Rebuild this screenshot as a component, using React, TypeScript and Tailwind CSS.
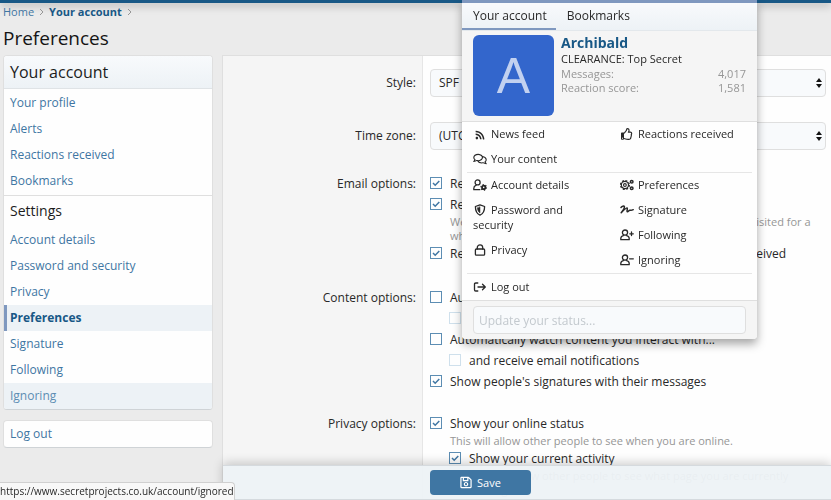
import type { ReactNode } from "react";
import { FaRegComments, FaRegSave, FaRegThumbsUp, FaRss } from "react-icons/fa";

type IconProps = { children: ReactNode };

const LineIcon: React.FC<IconProps> = ({ children }) => (
  <svg
    viewBox="0 0 14 12"
    className="h-3 w-[14px]"
    fill="none"
    stroke="currentColor"
    strokeWidth="1.3"
    strokeLinecap="round"
    strokeLinejoin="round"
    aria-hidden="true"
  >
    {children}
  </svg>
);

const person = (
  <>
    <circle cx="5" cy="3.6" r="2.6" />
    <path d="M3.4 6.7C1.8 7 .8 8 .8 9.6v1.1h8.4V9.6C9.2 8 8.2 7 6.6 6.7" />
  </>
);

const icons = {
  feed: (
    <FaRss className="h-[10px] w-[14px]" />
  ),
  like: <FaRegThumbsUp className="h-3 w-[14px]" />,
  content: <FaRegComments className="h-3 w-[14px]" />,
  account: (
    <LineIcon>
      <circle cx="4.6" cy="3.4" r="2.5" />
      <path d="M3 6.4C1.6 6.8.8 7.8.8 9.4v1.3h6" />
      <circle cx="10.7" cy="8.4" r="1.7" strokeWidth="1.8" />
      <circle cx="10.7" cy="8.4" r="2.8" strokeWidth="1.2" strokeDasharray="1.2 1.73" strokeLinecap="butt" />
    </LineIcon>
  ),
  preferences: (
    <LineIcon>
      <circle cx="4.9" cy="6" r="3.6" strokeWidth="1.2" />
      <circle cx="4.9" cy="6" r="4.5" strokeWidth="1.1" strokeDasharray="2 1.53" strokeLinecap="butt" />
      <circle cx="4.9" cy="6" r="1.4" strokeWidth="1.1" />
      <circle cx="11.7" cy="2.7" r="1.3" strokeWidth="1.5" />
      <circle cx="11.7" cy="9.3" r="1.3" strokeWidth="1.5" />
    </LineIcon>
  ),
  password: (
    <LineIcon>
      <path d="M7 .8 11.6 2.5C11.6 7 10.2 9.8 7 11.2 3.8 9.8 2.4 7 2.4 2.5Z" />
      <path d="M7 3v6C5.2 7.8 4.5 6.1 4.4 4Z" fill="currentColor" strokeWidth=".5" />
    </LineIcon>
  ),
  signature: (
    <LineIcon>
      <path
        strokeWidth="1.5"
        d="M1 3.4C2 2.2 4 1.5 4.4 2.7c.4 1.7-1.9 4.4-3.2 6C3.5 6.4 6.2 3.6 7.1 3.9c.9.3-.8 3.6.2 3.9 1 .3 1.5-1.6 2.5-1.6.8 0 1.3.7 3.4-.5"
      />
    </LineIcon>
  ),
  privacy: (
    <LineIcon>
      <rect x="2.4" y="5" width="9.2" height="6.2" rx="1" />
      <path d="M4.3 5V3.5a2.7 2.7 0 0 1 5.4 0V5" />
    </LineIcon>
  ),
  following: (
    <LineIcon>
      {person}
      <path d="M9.8 4.8h3.5M11.5 3v3.6" />
    </LineIcon>
  ),
  ignoring: (
    <LineIcon>
      {person}
      <path d="M9.6 4.8h3.7" />
    </LineIcon>
  ),
  logout: (
    <LineIcon>
      <path d="M4.8 2H2.7C1.9 2 1.5 2.4 1.5 3.2v5.6c0 .8.4 1.2 1.2 1.2h2.1M5 6h7M9.5 3.3 12.3 6 9.5 8.7" />
    </LineIcon>
  ),
};

const accountLinks = ["Your profile", "Alerts", "Reactions received", "Bookmarks"];
const settingsLinks = [
  "Account details",
  "Password and security",
  "Privacy",
  "Preferences",
  "Signature",
  "Following",
  "Ignoring",
];

const SideLink: React.FC<{ label: string }> = ({ label }) => {
  let look = "pl-[6px]";
  if (label === "Preferences") {
    look = "border-l-[3px] border-[#7f98bf] bg-[#edf2f6] pl-[3px] font-bold text-[#185886]";
  }
  if (label === "Ignoring") look = "bg-[#edf2f6] pl-[6px] text-[#5c8db3]";
  return (
    <li>
      <a href="#" className={`block leading-[26px] ${look}`}>
        {label}
      </a>
    </li>
  );
};

const Sidebar: React.FC = () => (
  <nav className="w-[210px] shrink-0 text-xs text-[#3f76a3]">
    <div className="overflow-hidden rounded-sm border border-[#dfdfdf] border-b-[#cfd3d6] bg-[#fefefe]">
      <h2 className="border-b border-[#dfe3e6] bg-linear-to-b from-[#f8fafc] to-[#edf2f6] pl-[6px] text-base leading-8 text-[#1c1c1c]">
        Your account
      </h2>
      <ul className="pt-px pb-px">
        {accountLinks.map((label) => (
          <SideLink key={label} label={label} />
        ))}
      </ul>
      <h3 className="border-t border-[#dfdfdf] pt-px pl-[6px] text-sm leading-7 text-[#1c1c1c]">Settings</h3>
      <ul className="pt-[2px]">
        {settingsLinks.map((label) => (
          <SideLink key={label} label={label} />
        ))}
      </ul>
    </div>
    <a
      href="#"
      className="mt-[10px] block rounded-sm border border-[#dfdfdf] border-b-[#cfd3d6] bg-[#fefefe] pl-[6px] leading-[26px]"
    >
      Log out
    </a>
  </nav>
);

type CheckProps = {
  label: string;
  checked?: boolean;
  disabled?: boolean;
  hint?: string;
};

const Check: React.FC<CheckProps> = ({ label, checked, disabled, hint }) => (
  <div>
    <label className="flex gap-2">
      <span className="relative mt-[3px] h-3 w-3 shrink-0">
        <input
          type="checkbox"
          defaultChecked={checked}
          disabled={disabled}
          className="peer block h-3 w-3 appearance-none border border-[#5c8db3] bg-[#fefefe] disabled:border-[#cfe0ec]"
        />
        <svg viewBox="0 0 12 12" className="pointer-events-none absolute inset-0 hidden peer-checked:block">
          <path d="m3 6 2.2 2.2L9.3 4" fill="none" strokeWidth="1.5" className="stroke-[#3f76a3]" />
        </svg>
      </span>
      <span>{label}</span>
    </label>
    {hint && <p className="pl-5 text-[11px] leading-[14px] text-[#969696]">{hint}</p>}
  </div>
);

const Row: React.FC<{ label: string; id?: string; pad: string; children: ReactNode }> = ({
  label,
  id,
  pad,
  children,
}) => (
  <div className="flex">
    <div className={`w-[200px] shrink-0 border-r border-[#e6e6e6] bg-[#f5f5f5] pr-[6px] text-right ${pad}`}>
      <label htmlFor={id}>{label}</label>
    </div>
    <div className={`min-w-0 flex-1 pr-[5px] pl-[7px] ${pad}`}>{children}</div>
  </div>
);

const Select: React.FC<{ id: string; value: string }> = ({ id, value }) => (
  <div className="relative">
    <select
      id={id}
      className="block h-7 w-full appearance-none rounded-sm border border-[#dfdfdf] bg-[#f8fafc] px-2 text-xs"
    >
      <option>{value}</option>
    </select>
    <svg viewBox="0 0 6 10" className="pointer-events-none absolute top-[9px] right-1 h-[10px] w-[6px]">
      <path d="M3 0 6 4H0ZM3 10 0 6h6Z" fill="#141414" />
    </svg>
  </div>
);

const PreferencesForm: React.FC = () => (
  <form className="min-w-0 flex-1 border-t border-l border-[#dfdfdf] bg-[#fefefe] text-xs leading-5">
    <Row label="Style:" id="style" pad="pt-[13px] pb-3 leading-7">
      <Select id="style" value="SPF" />
    </Row>
    <Row label="Time zone:" id="zone" pad="pt-[13px] pb-3 leading-7">
      <Select id="zone" value="(UTC+00:00) Western Europe Time, London, Lisbon" />
    </Row>
    <Row label="Email options:" pad="pt-3 pb-3">
      <div className="flex flex-col gap-px">
        <Check label="Receive news and update emails" checked />
        <Check
          label="Receive activity summary email"
          checked
          hint="We will send you an email with top content if you have not visited for a while."
        />
        <Check label="Receive email when a new conversation message is received" checked />
      </div>
    </Row>
    <Row label="Content options:" pad="pt-3 pb-[11px]">
      <div className="flex flex-col gap-px">
        <Check label="Automatically watch content you create..." />
        <div className="pl-[19px]">
          <Check label="and receive email notifications" disabled />
        </div>
        <Check label="Automatically watch content you interact with..." />
        <div className="pl-[19px]">
          <Check label="and receive email notifications" disabled />
        </div>
        <Check label="Show people's signatures with their messages" checked />
      </div>
    </Row>
    <Row label="Privacy options:" pad="pt-[11px] pb-4">
      <div className="flex flex-col gap-px">
        <Check
          label="Show your online status"
          checked
          hint="This will allow other people to see when you are online."
        />
        <div className="pl-[19px]">
          <Check
            label="Show your current activity"
            checked
            hint="This will allow other people to see what page you are currently viewing."
          />
        </div>
      </div>
    </Row>
    <div className="sticky bottom-0 border-t border-b border-[#d5dade] bg-[#edf2f6]/95 py-1 pl-[207px] shadow-[0_-2px_10px_rgba(0,0,0,0.2)]">
      <button
        type="submit"
        className="flex h-[25px] w-[101px] items-center justify-center gap-[5px] rounded-sm bg-[#3f76a3] text-[11px] text-white"
      >
        <FaRegSave className="h-[13px] w-3" />
        Save
      </button>
    </div>
  </form>
);

const MenuLink: React.FC<{ icon: keyof typeof icons; label: string }> = ({ icon, label }) => (
  <a href="#" className="block pt-1 pb-[6px] leading-[15px]">
    <span className="mr-1 inline-block align-[-2px]">{icons[icon]}</span>
    {label}
  </a>
);

const AccountMenu: React.FC = () => (
  <div className="absolute top-0 left-[462px] w-[295px] rounded-b-sm border-t-[3px] border-[#7f98bf] bg-[#fefefe] text-[11px] text-[#282828] shadow-[0_5px_10px_rgba(0,0,0,0.35)]">
    <div className="flex border-b border-[#e3e8ec] bg-linear-to-b from-[#f8fafc] to-[#edf2f6] text-xs leading-[25px]">
      <button type="button" className="border-b-2 border-[#7f98bf] pr-[9px] pl-[11px]">
        Your account
      </button>
      <button type="button" className="border-b-2 border-transparent px-[11px]">
        Bookmarks
      </button>
    </div>
    <div className="flex gap-[7px] border-b border-[#dfdfdf] bg-[#f5f5f5] px-[11px] pt-1 pb-[5px]">
      <div className="flex h-[81px] w-[81px] shrink-0 items-center justify-center rounded-md bg-[#3366cc] font-['Liberation_Sans'] text-[50px] leading-none text-[#c2d1f0]">
        A
      </div>
      <div className="flex-1 leading-[14px]">
        <a href="#" className="block text-sm leading-4 font-bold text-[#185886]">
          Archibald
        </a>
        <p className="pt-px">CLEARANCE: Top Secret</p>
        <dl className="grid grid-cols-[1fr_auto] pt-px text-[#969696]">
          <dt>Messages:</dt>
          <dd className="text-right">4,017</dd>
          <dt>Reaction score:</dt>
          <dd className="text-right">1,581</dd>
        </dl>
      </div>
    </div>
    <div className="grid grid-cols-[147px_1fr] px-[11px]">
      <div>
        <MenuLink icon="feed" label="News feed" />
        <MenuLink icon="content" label="Your content" />
      </div>
      <div>
        <MenuLink icon="like" label="Reactions received" />
      </div>
    </div>
    <hr className="mx-[5px] border-[#e6e6e6]" />
    <div className="grid grid-cols-[147px_1fr] px-[11px]">
      <div className="pr-8">
        <MenuLink icon="account" label="Account details" />
        <MenuLink icon="password" label="Password and security" />
        <MenuLink icon="privacy" label="Privacy" />
      </div>
      <div>
        <MenuLink icon="preferences" label="Preferences" />
        <MenuLink icon="signature" label="Signature" />
        <MenuLink icon="following" label="Following" />
        <MenuLink icon="ignoring" label="Ignoring" />
      </div>
    </div>
    <hr className="mx-[5px] border-[#e6e6e6]" />
    <div className="px-[11px] pt-px">
      <MenuLink icon="logout" label="Log out" />
    </div>
    <div className="rounded-b-sm border-t border-[#dfdfdf] bg-[#f5f5f5] px-[11px] py-[5px]">
      <input
        type="text"
        aria-label="Update your status"
        placeholder="Update your status..."
        className="block h-7 w-full rounded-sm border border-[#dfdfdf] bg-[#f8fafc] px-[5px] text-xs placeholder:text-[#c3c9ce]"
      />
    </div>
  </div>
);

const App: React.FC = () => {
  return (
    <div className="relative h-screen overflow-hidden bg-[#ebebeb] font-['Open_Sans',sans-serif] text-[#282828]">
      <div className="h-[3px] bg-[#185886] shadow-[0_2px_8px_rgba(0,0,0,0.4)]" />
      <header className="pl-[3px]">
        <nav className="flex items-center gap-[5px] text-[11px] leading-[18px] text-[#3f76a3]">
          <a href="#">Home</a>
          <svg viewBox="0 0 5 8" className="h-2 w-[5px]" fill="none" stroke="#969696">
            <path d="m1 1 3 3-3 3" />
          </svg>
          <a href="#" className="font-bold text-[#185886]">
            Your account
          </a>
          <svg viewBox="0 0 5 8" className="h-2 w-[5px]" fill="none" stroke="#969696">
            <path d="m1 1 3 3-3 3" />
          </svg>
        </nav>
        <h1 className="pt-[3px] pb-[3px] text-[19px] leading-7 text-[#141414]">Preferences</h1>
      </header>
      <div className="flex items-start gap-[9px] pl-[3px]">
        <Sidebar />
        <PreferencesForm />
      </div>
      <AccountMenu />
      <div className="absolute bottom-0 left-0 rounded-tr-sm border-t border-r border-[#d0d0d0] bg-[#f8f8f8] text-[10px] leading-[17px]">
        https://www.secretprojects.co.uk/account/ignored
      </div>
    </div>
  );
};

export default App;
